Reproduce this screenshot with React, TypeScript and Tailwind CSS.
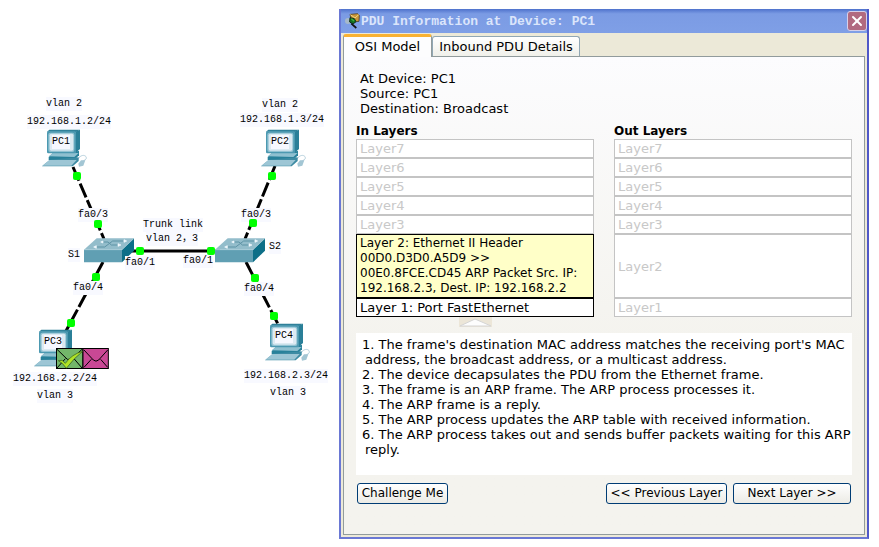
import { X } from "lucide-react";

type Point = { x: number; y: number };

const computers = [
  { name: "PC1", x: 42, y: 129 },
  { name: "PC2", x: 261, y: 129 },
  { name: "PC3", x: 34, y: 329 },
  { name: "PC4", x: 265, y: 323 },
];

const switches: Point[] = [
  { x: 84, y: 238 },
  { x: 215, y: 238 },
];

const ports: Point[] = [
  { x: 77, y: 176 },
  { x: 98, y: 224 },
  { x: 140, y: 251 },
  { x: 96, y: 277 },
  { x: 71, y: 323 },
  { x: 272, y: 176 },
  { x: 253, y: 223 },
  { x: 211, y: 251 },
  { x: 255, y: 278 },
  { x: 274, y: 316 },
];

const labels = [
  { text: "vlan 2", x: 46, y: 97 },
  { text: "192.168.1.2/24", x: 27, y: 115 },
  { text: "vlan 2", x: 262, y: 98 },
  { text: "192.168.1.3/24", x: 240, y: 113 },
  { text: "fa0/3", x: 78, y: 208 },
  { text: "S1", x: 68, y: 248 },
  { text: "fa0/1", x: 125, y: 256 },
  { text: "fa0/4", x: 73, y: 281 },
  { text: "Trunk link", x: 143, y: 218 },
  { text: "vlan 2，3", x: 146, y: 232 },
  { text: "fa0/1", x: 183, y: 254 },
  { text: "fa0/3", x: 241, y: 208 },
  { text: "S2", x: 269, y: 240 },
  { text: "fa0/4", x: 244, y: 282 },
  { text: "192.168.2.2/24", x: 13, y: 372 },
  { text: "vlan 3", x: 37, y: 389 },
  { text: "192.168.2.3/24", x: 244, y: 369 },
  { text: "vlan 3", x: 270, y: 386 },
];

const layerTwo = [
  "Layer 2: Ethernet II Header",
  "00D0.D3D0.A5D9 >>",
  "00E0.8FCE.CD45 ARP Packet Src. IP:",
  "192.168.2.3, Dest. IP: 192.168.2.2",
];

const steps = [
  "1. The frame's destination MAC address matches the receiving port's MAC address, the broadcast address, or a multicast address.",
  "2. The device decapsulates the PDU from the Ethernet frame.",
  "3. The frame is an ARP frame. The ARP process processes it.",
  "4. The ARP frame is a reply.",
  "5. The ARP process updates the ARP table with received information.",
  "6. The ARP process takes out and sends buffer packets waiting for this ARP reply.",
];

const monoFont = "font-['Liberation_Mono','Noto_Sans_CJK_SC',monospace]";

function ComputerIcon() {
  return (
    <svg width="46" height="38" viewBox="96 118 138 114" className="block" aria-hidden="true">
      <path d="M204 208 C214 192 230 196 229 206 C227 214 214 212 212 222" fill="none" stroke="#b4cfdc" strokeWidth="3" />
      <path d="M205 222 L213 212 L226 212 L220 228 L207 231 Z" fill="#a3c6d4" />
      <path d="M116 202 L128 191 L207 184 L207 197 L193 211 L116 211 Z" fill="#28819a" />
      <path d="M116 200 L128 190 L206 190 L193 202 Z" fill="#8fc0d0" />
      <path d="M96 230 L120 210 L206 203 L206 214 L188 230 Z" fill="#3d8ba3" />
      <path d="M97 228 L118 211 L200 211 L184 228 Z" fill="#9dc6d5" />
      <path d="M111 126 L118 120 L210 120 L198 127 Z" fill="#2f8099" />
      <path d="M196 126 L210 120 L210 178 L196 191 Z" fill="#2a7f98" />
      <rect x="111" y="125" width="87" height="66" rx="4" fill="#4c99b1" />
      <rect x="115" y="129" width="78" height="58" rx="6" fill="#93c3d3" />
      <rect x="119" y="132" width="71" height="51" rx="5" fill="#dceaf2" />
    </svg>
  );
}

function SwitchIcon() {
  return (
    <svg width="50" height="25" viewBox="0 0 150 75" className="block" aria-hidden="true">
      <path d="M0 35 L38 1 H150 L114 35 Z" fill="#93bdcb" />
      <path d="M0 35 H114 V73 H0 Z" fill="#609fb3" />
      <path d="M114 35 L150 1 V38 L114 73 Z" fill="#0d6f88" />
      <path d="M0 35 H114 L150 1" fill="none" stroke="#b2d3dd" strokeWidth="2" />
      <path d="M56 12 H72 L82 21 H102 M36 27 H62 L86 9 H118" fill="none" stroke="#5d93a5" strokeWidth="3" />
      <path d="M57 9 V15 L50 12 Z M120 5 V13 L128 9 Z M37 23 V31 L29 27 Z M102 17 V25 L111 21 Z" fill="#f4fbff" stroke="#f4fbff" strokeWidth="2" />
    </svg>
  );
}

function Envelopes() {
  return (
    <svg width="53" height="21" viewBox="0 0 159 63" className="block" aria-hidden="true">
      <rect x="1.5" y="1.5" width="79" height="60" fill="#73b66a" stroke="#000" strokeWidth="3" />
      <rect x="81" y="1.5" width="76" height="60" fill="#c94895" stroke="#000" strokeWidth="3" />
      <path d="M3 4 L34 34 H47 L78 4 M3 60 L28 32 M78 60 L54 32" fill="none" stroke="#000" strokeWidth="3" />
      <path d="M84 6 L112 36 Q120 43 128 36 L155 6 M84 58 L106 34 M155 58 L134 34" fill="none" stroke="#000" strokeWidth="3" />
      <path d="M7 38 L18 37 L28 46 Q48 18 80 10 Q54 30 31 61 Q20 44 7 38 Z" fill="#b0e326" stroke="#315816" strokeWidth="2" />
    </svg>
  );
}

function TitleIcon() {
  return (
    <svg width="16" height="16" viewBox="0 0 48 48" className="block shrink-0" aria-hidden="true">
      <path d="M15 4 L38 2 L43 7 L42 25 L20 28 Z" fill="#c9963a" stroke="#3c2b10" strokeWidth="2" />
      <path d="M16 5 L30 15 L41 5" fill="none" stroke="#f4d77e" strokeWidth="3" />
      <circle cx="9" cy="24" r="9" fill="#a7b9c9" />
      <path d="M15 14 L28 17 L33 26 L24 33 L14 27 Z" fill="#137020" stroke="#12301a" strokeWidth="3" />
      <path d="M19 17 L27 24" stroke="#3fae3f" strokeWidth="4" />
      <path d="M19 32 L34 45" stroke="#111" strokeWidth="5" />
    </svg>
  );
}

function Topology() {
  return (
    <section aria-label="Network topology" className={`relative min-h-[420px] w-[339px] shrink-0 text-[10px] leading-[14px] text-black ${monoFont}`}>
      <svg width="339" height="420" className="absolute left-0 top-0" aria-hidden="true">
        <g stroke="#000" strokeWidth="3" strokeDasharray="15 3">
          <path d="M73 167 L104 239" />
          <path d="M275 166 L245 239" />
          <path d="M103 262 L66 331" />
          <path d="M246 262 L279 326" />
        </g>
        <path d="M130 251 H220" stroke="#000" strokeWidth="3" />
      </svg>
      {switches.map((s) => (
        <div key={s.x} className="absolute" style={{ left: s.x, top: s.y }}>
          <SwitchIcon />
        </div>
      ))}
      {computers.map((c) => (
        <div key={c.name} className="absolute" style={{ left: c.x, top: c.y }}>
          <ComputerIcon />
          <span className="absolute left-[10px] top-[6px] bg-[#f6f8ff]">{c.name}</span>
        </div>
      ))}
      {labels.map((l) => (
        <span key={`${l.x}-${l.y}`} className="absolute whitespace-nowrap bg-[#f8f9ff]" style={{ left: l.x, top: l.y }}>
          {l.text}
        </span>
      ))}
      {ports.map((p) => (
        <span key={`${p.x}-${p.y}`} className="absolute size-2 -translate-x-1 -translate-y-1 rounded-xs bg-[#00ff00]" style={{ left: p.x, top: p.y }} />
      ))}
      <div className="absolute left-[56px] top-[348px]">
        <Envelopes />
      </div>
    </section>
  );
}

function IdleLayer({ name, grow = false }: { name: string; grow?: boolean }) {
  return (
    <li className={`flex items-center border border-[#c4c4c4] bg-white px-[3px] py-px text-[#c8c8c8] ${grow ? "grow" : ""}`}>
      {name}
    </li>
  );
}

function DialogButton({ children, className }: { children: string; className: string }) {
  return (
    <button type="button" className={`h-[21px] whitespace-nowrap rounded-[3px] border border-[#003c74] bg-linear-to-b from-white to-[#ecebe5] text-center text-[12px] leading-[15px] ${className}`}>
      {children}
    </button>
  );
}

function PduDialog() {
  return (
    <section
      role="dialog"
      aria-label="PDU Information at Device: PC1"
      className="flex min-w-[500px] grow flex-col border-2 border-t-0 border-[#6a78d4] border-r-[#5058c8] bg-[#ece9d8] font-['DejaVu_Sans',Verdana,sans-serif] text-[13px] leading-[15px] text-black"
    >
      <header className="flex h-[24px] items-center bg-linear-to-b from-[#4f72cc] via-[#7b9be4] via-20% to-[#7f9fe6] pl-1">
        <TitleIcon />
        <h1 className={`grow whitespace-nowrap text-[13px] font-bold text-[#dbe5fb] ${monoFont}`}>PDU Information at Device: PC1</h1>
        <button type="button" aria-label="Close" className="flex h-[20px] w-[20px] items-center justify-center rounded-[3px] border border-[#d5d0ea] bg-[#b16a80] text-white">
          <X size={16} strokeWidth={3} />
        </button>
      </header>

      <div className="flex grow flex-col px-[2px] pb-[2px]">
        <div role="tablist" className="flex h-[23px] items-end">
          <button type="button" role="tab" aria-selected="true" className="relative z-10 -mb-px h-[23px] w-[89px] rounded-t-[3px] border border-b-0 border-t-[3px] border-[#919b9c] border-t-[#f9b233] bg-[#fdfdfe] pb-[2px] text-center">
            OSI Model
          </button>
          <button type="button" role="tab" aria-selected="false" className="h-[20px] w-[148px] whitespace-nowrap rounded-t-[3px] border border-b-0 border-[#91a7b4] bg-linear-to-b from-white to-[#f0f0ea] text-center">
            Inbound PDU Details
          </button>
        </div>

        <div role="tabpanel" className="flex grow flex-col border border-[#919b9c] bg-linear-to-b from-[#fcfcfe] to-[#f4f3ee] to-60% px-[12px] pb-[30px] pt-[14px]">
          <div className="px-1">
            <p>At Device: PC1</p>
            <p>Source: PC1</p>
            <p>Destination: Broadcast</p>
          </div>

          <div className="mt-2 grid grid-cols-2 gap-5">
            <div>
              <h2 className="text-[12px] font-bold">In Layers</h2>
              <ul>
                <IdleLayer name="Layer7" />
                <IdleLayer name="Layer6" />
                <IdleLayer name="Layer5" />
                <IdleLayer name="Layer4" />
                <IdleLayer name="Layer3" />
                <li className="border border-black bg-[#ffffc8] px-[3px] py-px text-[12px]">
                  {layerTwo.map((line) => (
                    <span key={line} className="block whitespace-nowrap">
                      {line}
                    </span>
                  ))}
                </li>
                <li className="border border-black bg-white px-[3px] py-px">Layer 1: Port FastEthernet</li>
              </ul>
            </div>
            <div className="flex flex-col">
              <h2 className="text-[12px] font-bold">Out Layers</h2>
              <ul className="flex grow flex-col">
                <IdleLayer name="Layer7" />
                <IdleLayer name="Layer6" />
                <IdleLayer name="Layer5" />
                <IdleLayer name="Layer4" />
                <IdleLayer name="Layer3" />
                <IdleLayer name="Layer2" grow />
                <IdleLayer name="Layer1" />
              </ul>
            </div>
          </div>

          <div className="grid h-[16px] grid-cols-2 gap-5">
            <svg width="33" height="10" viewBox="0 0 33 10" className="mx-auto block" aria-hidden="true">
              <rect width="33" height="10" fill="#ece6d8" />
              <path d="M1 9 L16 2 L32 9 Z" fill="#fdfdfd" stroke="#d5d5d5" />
            </svg>
          </div>

          <ol className="min-h-[142px] bg-white pl-[9px] pt-[4px]">
            {steps.map((step) => (
              <li key={step} className="-indent-[3px]">
                {step}
              </li>
            ))}
          </ol>

          <div className="mt-2 flex items-center gap-[6px] px-px">
            <DialogButton className="mr-auto w-[91px]">Challenge Me</DialogButton>
            <DialogButton className="w-[121px]">{"<< Previous Layer"}</DialogButton>
            <DialogButton className="w-[118px]">{"Next Layer >>"}</DialogButton>
          </div>
        </div>
      </div>
    </section>
  );
}

export default function App() {
  return (
    <main className="flex min-h-screen items-stretch bg-white pb-2 pr-[10px]">
      <Topology />
      <div className="flex grow flex-col pt-[9px]">
        <PduDialog />
      </div>
    </main>
  );
}
